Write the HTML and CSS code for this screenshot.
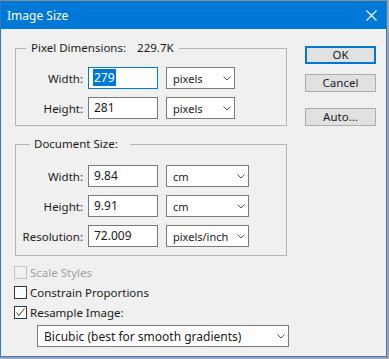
FILE: index.html
```html
<!DOCTYPE html>
<html>
<head>
<meta charset="UTF-8">
<title>Image Size</title>
<link rel="stylesheet" href="styles.css">
</head>
<body>
	<div class="window">
		<div class="titlebar">
			<span class="title">Image Size</span>
			<svg class="close" width="11" height="11" viewBox="0 0 11 11">
				<path d="M0.5 0.5 L10.5 10.5 M10.5 0.5 L0.5 10.5" stroke="#fff" stroke-width="1.2" fill="none"/>
			</svg>
		</div>
		<div class="content">
			<div class="main">
				<!-- 픽셀 크기 -->
				<fieldset class="group group-px">
					<legend class="legend legend-px">Pixel Dimensions:<span class="size">229.7K</span></legend>
					<div class="rows">
						<div class="row">
							<label class="lbl">Width:</label>
							<div class="field focus"><span class="sel">279</span></div>
							<div class="dropdown short">pixels
								<svg class="chev" width="8" height="5" viewBox="0 0 8 5"><path d="M0.5 0.5 L4 4 L7.5 0.5" stroke="#555" fill="none"/></svg>
							</div>
						</div>
						<div class="row">
							<label class="lbl">Height:</label>
							<div class="field">281</div>
							<div class="dropdown short">pixels
								<svg class="chev" width="8" height="5" viewBox="0 0 8 5"><path d="M0.5 0.5 L4 4 L7.5 0.5" stroke="#555" fill="none"/></svg>
							</div>
						</div>
					</div>
				</fieldset>

				<!-- 문서 크기 -->
				<fieldset class="group group-doc">
					<legend class="legend legend-doc">Document Size:</legend>
					<div class="rows">
						<div class="row">
							<label class="lbl">Width:</label>
							<div class="field">9.84</div>
							<div class="dropdown long">cm
								<svg class="chev" width="8" height="5" viewBox="0 0 8 5"><path d="M0.5 0.5 L4 4 L7.5 0.5" stroke="#555" fill="none"/></svg>
							</div>
						</div>
						<div class="row">
							<label class="lbl">Height:</label>
							<div class="field">9.91</div>
							<div class="dropdown long">cm
								<svg class="chev" width="8" height="5" viewBox="0 0 8 5"><path d="M0.5 0.5 L4 4 L7.5 0.5" stroke="#555" fill="none"/></svg>
							</div>
						</div>
						<div class="row">
							<label class="lbl">Resolution:</label>
							<div class="field">72.009</div>
							<div class="dropdown long">pixels/inch
								<svg class="chev" width="8" height="5" viewBox="0 0 8 5"><path d="M0.5 0.5 L4 4 L7.5 0.5" stroke="#555" fill="none"/></svg>
							</div>
						</div>
					</div>
				</fieldset>

				<!-- 체크 박스 -->
				<div class="checks">
					<div class="check disabled"><span class="box"></span>Scale Styles</div>
					<div class="check"><span class="box"></span>Constrain Proportions</div>
					<div class="check"><span class="box">
						<svg width="11" height="11" viewBox="0 0 11 11"><path d="M1.5 5.5 L4 8.5 L9.5 1.5" stroke="#333" stroke-width="1" fill="none"/></svg>
					</span>Resample Image:</div>
				</div>

				<div class="dropdown method">Bicubic (best for smooth gradients)
					<svg class="chev" width="8" height="5" viewBox="0 0 8 5"><path d="M0.5 0.5 L4 4 L7.5 0.5" stroke="#555" fill="none"/></svg>
				</div>
			</div>

			<div class="buttons">
				<button class="btn default">OK</button>
				<button class="btn">Cancel</button>
				<button class="btn auto">Auto...</button>
			</div>
		</div>
	</div>
</body>
</html>
```

FILE: styles.css
```css
body {
	margin: 0;
	background: #a3a3a3;
	font-family: "Noto Sans", "Open Sans", sans-serif;
	font-size: 11.5px;
	color: #1a1a1a;
}

.window {
	width: 387px;
	height: 357px;
	box-sizing: border-box;
	border: 1px solid #2b7ad0;
	border-top-color: #8c8c8c;
	background: #f0f0f0;
}

.titlebar {
	height: 28px;
	background: #0078d7;
	display: flex;
	align-items: center;
	justify-content: space-between;
	padding: 0 9px 0 6px;
}

.title {
	color: #fff;
	font-size: 12px;
}

.content {
	display: flex;
	padding: 11px 0 0 14px;
}

.main {
	width: 272px;
}

.group {
	margin: 0;
	padding: 0;
	border: 1px solid #b5b5b5;
	min-width: 0;
}

.group-px {
	padding: 11px 0 6px 0;
}

.group-doc {
	margin-top: 10px;
	padding: 13px 0 8px 0;
}

.legend {
	line-height: 16px;
	height: 16px;
}

.legend-px {
	margin-left: 10px;
	padding: 0 5px 0 5px;
}

.legend-px .size {
	margin-left: 11px;
}

.legend-doc {
	margin-left: 14px;
	padding: 0 12px 0 4px;
}

.rows {
	display: flex;
	flex-direction: column;
	gap: 8px;
}

.row {
	display: flex;
	align-items: center;
	height: 22px;
}

.lbl {
	width: 67px;
	text-align: right;
	margin-right: 5px;
}

.field {
	width: 70px;
	height: 22px;
	box-sizing: border-box;
	border: 1px solid #7a7a7a;
	background: #fff;
	padding-left: 5px;
	line-height: 20px;
	margin-right: 8px;
	font-size: 12px;
}

.field.focus {
	border-color: #0078d7;
}

.sel {
	background: #0078d7;
	color: #fff;
	padding: 0 1px;
	margin-left: -1px;
}

.dropdown {
	height: 22px;
	box-sizing: border-box;
	border: 1px solid #7a7a7a;
	background: #fff;
	display: flex;
	align-items: center;
	justify-content: space-between;
	padding: 0 3px 0 6px;
	font-size: 11px;
}

.short {
	width: 69px;
}

.long {
	width: 83px;
}

.chev {
	flex: none;
}

.checks {
	margin: 6px 0 0 -1px;
}

.check {
	height: 20px;
	display: flex;
	align-items: center;
}

.box {
	width: 13px;
	height: 13px;
	box-sizing: border-box;
	border: 1px solid #333;
	background: #fff;
	margin-right: 3px;
	display: flex;
	align-items: center;
	justify-content: center;
}

.check.disabled {
	color: #a0a0a0;
}

.check.disabled .box {
	border-color: #c4c4c4;
	background: #f0f0f0;
}

.method {
	width: 252px;
	margin: 3px 0 0 22px;
	padding-left: 6px;
	font-size: 12px;
}

.buttons {
	display: flex;
	flex-direction: column;
	margin: 6px 0 0 18px;
}

.btn {
	width: 71px;
	height: 18px;
	box-sizing: border-box;
	border: 1px solid #adadad;
	background: #e1e1e1;
	font-family: inherit;
	font-size: 11.5px;
	color: #1a1a1a;
	padding: 0;
	margin-bottom: 10px;
	line-height: 16px;
}

.btn.default {
	border: 2px solid #0078d7;
	line-height: 14px;
}

.btn.auto {
	margin-top: 6px;
}
```
